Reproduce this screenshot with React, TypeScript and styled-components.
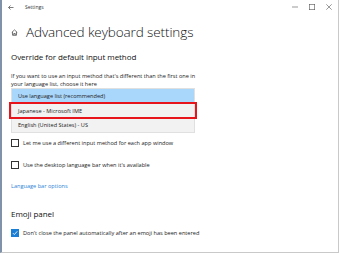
import React from "react";
import styled, { createGlobalStyle } from "styled-components";

const GlobalStyle = createGlobalStyle`
  html, body {
    margin: 0;
    padding: 0;
    background: #ffffff;
  }
  body {
    font-family: "Open Sans", "Noto Sans", sans-serif;
    color: #1a1a1a;
  }
`;

const Window = styled.div`
  box-sizing: border-box;
  width: 339px;
  height: 253px;
  border-left: 2px solid #7f92aa;
  border-right: 1px solid #c9c9c9;
  border-bottom: 1px solid #c9c9c9;
  background: #ffffff;
  display: flex;
  flex-direction: column;
  overflow: hidden;
`;

const TitleBar = styled.div`
  height: 14px;
  display: flex;
  align-items: center;
  padding-left: 6px;
`;

const TitleText = styled.span`
  font-size: 5px;
  color: #333;
  margin-left: 11px;
`;

const Controls = styled.div`
  margin-left: auto;
  display: flex;
  align-items: center;
  gap: 11px;
  padding-right: 6px;
`;

const Content = styled.div`
  padding-left: 9px;
  display: flex;
  flex-direction: column;
`;

const Header = styled.div`
  display: flex;
  align-items: center;
  height: 18px;
  margin-top: 9px;
`;

const PageTitle = styled.h1`
  margin: 0 0 0 8px;
  font-size: 13.5px;
  font-weight: 300;
  color: #111;
  letter-spacing: -0.1px;
`;

const SectionTitle = styled.h2<{ $top: number }>`
  margin: ${(p) => p.$top}px 0 0;
  font-size: 8px;
  font-weight: 400;
  line-height: 12px;
  color: #111;
  letter-spacing: -0.05px;
`;

const Description = styled.p`
  margin: 9px 0 0;
  font-size: 5.6px;
  line-height: 8px;
  color: #222;
  width: 194px;
`;

const ListBox = styled.div`
  box-sizing: border-box;
  margin-top: 0;
  width: 184px;
  background: #f2f2f2;
  border: 1px solid #e0e0e0;
  display: flex;
  flex-direction: column;
`;

const Option = styled.div<{ $selected?: boolean; $marked?: boolean }>`
  height: ${(p) => (p.$marked ? 15 : 14)}px;
  display: flex;
  align-items: center;
  font-size: 5.6px;
  color: #222;
  background: ${(p) => (p.$selected ? "#a9d6fb" : "transparent")};
  outline: ${(p) => (p.$marked ? "2px solid #e8141c" : "none")};
  outline-offset: -1px;
  margin: ${(p) => (p.$marked ? "0 -2px" : "0")};
  padding-left: ${(p) => (p.$marked ? 8 : 6)}px;
`;

const CheckRow = styled.label<{ $top: number }>`
  display: flex;
  align-items: center;
  gap: 4px;
  margin-top: ${(p) => p.$top}px;
  font-size: 5.6px;
  color: #222;
  height: 10px;
`;

const Box = styled.span<{ $checked?: boolean }>`
  box-sizing: border-box;
  width: 8px;
  height: 8px;
  border: 1px solid ${(p) => (p.$checked ? "#1a7fd4" : "#333")};
  background: ${(p) => (p.$checked ? "#1a7fd4" : "#fff")};
  display: flex;
  align-items: center;
  justify-content: center;
`;

const Link = styled.a`
  margin-top: 12px;
  font-size: 5.6px;
  color: #2b84d6;
  text-decoration: none;
  line-height: 8px;
`;

const Back = () => (
  <svg width="6" height="5" viewBox="0 0 12 10">
    <path d="M11 5H1.5M5 1L1 5l4 4" stroke="#444" strokeWidth="1.4" fill="none" />
  </svg>
);

const Home = () => (
  <svg width="7" height="7" viewBox="0 0 14 14">
    <path
      d="M1.5 7L7 1.8 12.5 7M3 5.8V12.5h8V5.8M5.5 12.5V9h3v3.5"
      stroke="#333"
      strokeWidth="1.3"
      fill="none"
    />
  </svg>
);

const Minimize = () => (
  <svg width="6" height="6" viewBox="0 0 10 10">
    <path d="M0 5h10" stroke="#555" strokeWidth="1" />
  </svg>
);

const Maximize = () => (
  <svg width="6" height="6" viewBox="0 0 10 10">
    <rect x="0.5" y="0.5" width="9" height="9" stroke="#555" fill="none" />
  </svg>
);

const Close = () => (
  <svg width="6" height="6" viewBox="0 0 10 10">
    <path d="M0.5 0.5l9 9M9.5 0.5l-9 9" stroke="#555" strokeWidth="1" />
  </svg>
);

const Check = () => (
  <svg width="6" height="6" viewBox="0 0 10 10">
    <path d="M1.5 5.2l2.4 2.4L8.8 2.2" stroke="#fff" strokeWidth="1.4" fill="none" />
  </svg>
);

export default function App() {
  return (
    <>
      <GlobalStyle />
      <Window>
        <TitleBar>
          <Back />
          <TitleText>Settings</TitleText>
          <Controls>
            <Minimize />
            <Maximize />
            <Close />
          </Controls>
        </TitleBar>
        <Content>
          <Header>
            <Home />
            <PageTitle>Advanced keyboard settings</PageTitle>
          </Header>
          <SectionTitle $top={10}>Override for default input method</SectionTitle>
          <Description>
            If you want to use an input method that's different than the first
            one in your language list, choose it here
          </Description>
          <ListBox>
            <Option $selected>Use language list (recommended)</Option>
            <Option $marked>Japanese - Microsoft IME</Option>
            <Option>English (United States) - US</Option>
          </ListBox>
          <CheckRow $top={5}>
            <Box />
            Let me use a different input method for each app window
          </CheckRow>
          <CheckRow $top={12}>
            <Box />
            Use the desktop language bar when it's available
          </CheckRow>
          <Link href="#">Language bar options</Link>
          <SectionTitle $top={18}>Emoji panel</SectionTitle>
          <CheckRow $top={8}>
            <Box $checked>
              <Check />
            </Box>
            Don't close the panel automatically after an emoji has been entered
          </CheckRow>
        </Content>
      </Window>
    </>
  );
}
